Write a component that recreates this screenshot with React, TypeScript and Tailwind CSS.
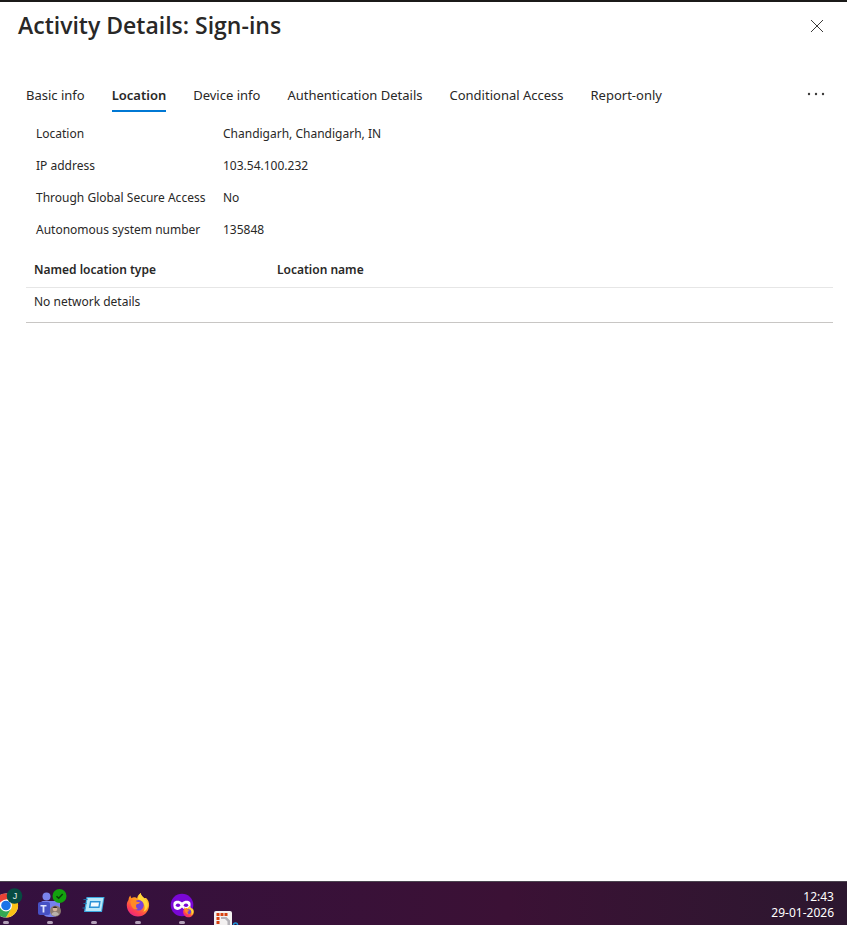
import { useState } from 'react';

const tabs = ['Basic info', 'Location', 'Device info', 'Authentication Details', 'Conditional Access', 'Report-only'];

const details = [
  { label: 'Location', value: 'Chandigarh, Chandigarh, IN' },
  { label: 'IP address', value: '103.54.100.232' },
  { label: 'Through Global Secure Access', value: 'No' },
  { label: 'Autonomous system number', value: '135848' },
];

function Running() {
  return <rect x="19" y="39" width="6" height="3" rx="1.5" fill="#b3a0b8" />;
}

function ChromeIcon() {
  return (
    <svg viewBox="16 0 28 43" className="h-[43px] w-7" aria-hidden="true">
      <circle cx="22" cy="23.5" r="12" fill="#fff" />
      <path d="M22 23.5 11.6 17.5A12 12 0 0 1 32.4 17.5H22Z" fill="#e94235" />
      <path d="M32.4 17.5A12 12 0 0 1 22 35.5L27.2 26.5 22 17.5Z" fill="#fbc116" />
      <path d="M11.6 17.5A12 12 0 0 0 22 35.5L27.2 26.5 16.8 26.5Z" fill="#34a853" />
      <circle cx="22" cy="23.5" r="6" fill="#fff" />
      <circle cx="22" cy="23.5" r="4.8" fill="#1a73e8" />
      <circle cx="30.5" cy="14" r="7.8" fill="#064b41" />
      <text x="31" y="17" textAnchor="middle" fontSize="9" fill="#e6f2ef" className="font-['Liberation_Sans',sans-serif]">J</text>
      <Running />
    </svg>
  );
}

function TeamsIcon() {
  return (
    <svg viewBox="0 0 44 43" className="h-[43px] w-11" aria-hidden="true">
      <circle cx="18.5" cy="14.5" r="4" fill="#7b83eb" />
      <path d="M13 21a2 2 0 0 1 2-2h15a2 2 0 0 1 2 2v7a7 7 0 0 1-7 7h-4a8 8 0 0 1-8-8Z" fill="#7680ed" />
      <rect x="10" y="20" width="12" height="13" rx="2" fill="#4650c4" />
      <path d="M12.5 23h6v1.600h-2.100v5.900h-1.800v-5.900h-2.100Z" fill="#dfe2ff" />
      <circle cx="27.5" cy="29" r="5.5" fill="#8c7b70" />
      <circle cx="27" cy="27" r="2.3" fill="#d7b49a" />
      <path d="M24.7 26a2.4 2.4 0 0 1 4.6 0Z" fill="#3b2b2a" />
      <path d="M23.5 32.5c1-3.6 6-3.6 7.5 0a5.5 5.5 0 0 1-7.5 0Z" fill="#b9b1ab" />
      <circle cx="31.5" cy="14" r="7" fill="#13a10e" />
      <path d="m28.5 14.2 2.2 2.1 4-4.2" fill="none" stroke="#093d08" strokeWidth="1.5" />
      <Running />
    </svg>
  );
}

function RunIcon() {
  return (
    <svg viewBox="0 0 44 43" className="h-[43px] w-11" aria-hidden="true">
      <path d="M14.500 15h18l-2.500 15H12Z" fill="#3ba9e0" />
      <path d="M15.500 16h15.800l-2.200 13H13.500Z" fill="#b9e8fa" />
      <path d="M18 19h10.700l-1.200 7H16.800Z" fill="#2a93d6" />
      <path d="M19.200 20.500h7.800l-.6 4h-7.800Z" fill="#f3fbff" />
      <path d="M11.500 17.5h4M11.500 21.5h3M10.500 26h3" stroke="#1c6fa8" strokeWidth="1" />
      <Running />
    </svg>
  );
}

function FirefoxShape() {
  return (
    <>
      <path d="M2 7C2.2 5 3 3.6 4 2.6c0 1.2.4 2 1 2.6 1-.8 2-1 3-.9C9.2 4.400 10 4.800 10.600 5.400 10.800 3.400 12 1.400 14.200 0c.2 2.200 1.600 3.400 3.600 5.200 1-.1 1.800-.1 1.800-.1C21.600 7.200 22.800 9.500 22.600 12.500 22.200 19 17.500 23.500 11.500 23.500S.500 19 .3 12.500C.2 10.500.8 8.600 2 7Z" fill="url(#flame)" />
      <path d="M11.500 6C11.700 3.400 12.600 1.400 14.200 0c.2 2.200 1.600 3.400 3.600 5.200 2.800 2.600 4.400 5.800 3.200 9.300-1 2.800-2.600 3.900-4.200 4.300 1.800-2.300 1.800-5.600.6-7.900C16.200 8.500 14 7 11.500 6Z" fill="#ffd83a" />
      <circle cx="12" cy="12.200" r="5.200" fill="#7542d9" />
      <path d="M4 8c2.500-1.500 5-.6 6.500.7l3 .5c-.5 1.500-2 1.800-3.400 2-1.300 1.600-.4 3.900 1.400 4.800C8 17.800 4 14.500 4 8Z" fill="#ff8a25" />
    </>
  );
}

function FirefoxIcon() {
  return (
    <svg viewBox="0 0 44 43" className="h-[43px] w-11" aria-hidden="true">
      <defs>
        <linearGradient id="flame" x1="0.8" y1="0" x2="0.2" y2="1">
          <stop offset="0" stopColor="#ffe03d" />
          <stop offset="0.45" stopColor="#ff8b1f" />
          <stop offset="0.75" stopColor="#ff4052" />
          <stop offset="1" stopColor="#e3218b" />
        </linearGradient>
      </defs>
      <g transform="translate(10.500 11)">
        <FirefoxShape />
      </g>
      <Running />
    </svg>
  );
}

function PrivateFirefoxIcon() {
  return (
    <svg viewBox="0 0 44 43" className="h-[43px] w-11" aria-hidden="true">
      <circle cx="22" cy="23" r="11.300" fill="#7a07d6" />
      <path d="M14 20c2-2 5.500-1.700 8 .4 2.500-2.100 6-2.400 8-.4.800 1 .9 5-.5 6.800-2 2-5.300 1.200-7.500-1.200-2.200 2.400-5.500 3.200-7.500 1.200C13.100 25 13.200 21 14 20Z" fill="#fff" />
      <ellipse cx="18" cy="23.200" rx="2.200" ry="1.700" fill="#7a07d6" />
      <ellipse cx="26" cy="23.200" rx="2.200" ry="1.700" fill="#7a07d6" />
      <g transform="translate(23 24) scale(.48)">
        <FirefoxShape />
      </g>
      <Running />
    </svg>
  );
}

function SnipIcon() {
  return (
    <svg viewBox="0 0 44 43" className="h-[43px] w-11" aria-hidden="true">
      <rect x="10" y="29" width="18" height="20" rx="2" fill="#f3f1f1" />
      <path d="M17 35h5.500l3.500 3.500V47h-2.500v-7.500L21 37h-4Z" fill="#b4b2b8" />
      <path d="M12.500 32.500H24" stroke="#d8410f" strokeWidth="3" strokeDasharray="3 1" />
      <path d="M14 35V45" stroke="#d8410f" strokeWidth="3" strokeDasharray="3 1" />
      <circle cx="31.500" cy="43" r="2" fill="none" stroke="#1f93d6" strokeWidth="1.500" />
    </svg>
  );
}

const apps = [
  { name: 'Chrome', Icon: ChromeIcon },
  { name: 'Teams', Icon: TeamsIcon },
  { name: 'Run', Icon: RunIcon },
  { name: 'Firefox', Icon: FirefoxIcon },
  { name: 'Firefox Private Browsing', Icon: PrivateFirefoxIcon },
  { name: 'Snipping Tool', Icon: SnipIcon },
];

export default function App() {
  const [activeTab, setActiveTab] = useState('Location');

  return (
    <div className="flex min-h-screen flex-col border-t-2 border-[#1b1a19] bg-white font-['Noto_Sans','Open_Sans',sans-serif] text-xs text-[#292827]">
      <header className="flex items-center justify-between pt-1 pr-5 pl-[18px]">
        <h1 className="pb-0.5 font-['Open_Sans','Noto_Sans',sans-serif] text-[23px] leading-[38px] font-semibold">
          Activity Details: Sign-ins
        </h1>
        <button aria-label="Close" className="p-1">
          <svg viewBox="0 0 12 12" className="size-3" fill="none" stroke="#3b3a39" aria-hidden="true">
            <path d="M0 0 12 12M12 0 0 12" />
          </svg>
        </button>
      </header>

      <main className="flex-1 pr-3.5 pl-[26px]">
        <div className="mt-9 flex items-start justify-between">
          <div role="tablist" className="flex gap-[27px]">
            {tabs.map((tab) => (
              <button
                key={tab}
                role="tab"
                aria-selected={tab === activeTab}
                onClick={() => setActiveTab(tab)}
                className={
                  tab === activeTab
                    ? 'h-[30px] border-b-2 border-[#0078d4] text-[13px] font-semibold whitespace-nowrap'
                    : 'h-[30px] border-b-2 border-transparent text-[13px] whitespace-nowrap'
                }
              >
                {tab}
              </button>
            ))}
          </div>
          <button aria-label="More tabs" className="flex h-6 items-center px-2">
            <svg viewBox="0 0 18 4" className="h-1 w-[18px]" fill="#3b3a39" aria-hidden="true">
              <circle cx="2" cy="2" r="1.200" />
              <circle cx="9" cy="2" r="1.200" />
              <circle cx="16" cy="2" r="1.200" />
            </svg>
          </button>
        </div>

        <dl className="mt-1.5 grid grid-cols-[187px_1fr] pl-2.5 leading-8">
          {details.map((item) => (
            <div key={item.label} className="contents">
              <dt className="whitespace-nowrap">{item.label}</dt>
              <dd>{item.value}</dd>
            </div>
          ))}
        </dl>

        <table className="mt-1.5 w-full table-fixed border-b border-[#c8c6c4] text-left">
          <thead>
            <tr className="h-[35px] border-b border-[#e6e6e6]">
              <th className="w-[243px] px-2 pt-0.5 font-semibold">Named location type</th>
              <th className="px-2 pt-0.5 font-semibold">Location name</th>
            </tr>
          </thead>
          <tbody>
            <tr>
              <td colSpan={2} className="px-2 pt-1.5 pb-3">No network details</td>
            </tr>
          </tbody>
        </table>
      </main>

      <footer className="flex items-center justify-between border-t border-[#4b444f] bg-linear-to-r from-[#34103f] via-[#3b1135] via-60% to-[#2c172f] pr-[13px]">
        <nav className="flex">
          {apps.map(({ name, Icon }) => (
            <button key={name} aria-label={name}>
              <Icon />
            </button>
          ))}
        </nav>
        <div className="pt-0.5 text-right leading-4 text-white">
          <div>12:43</div>
          <div>29-01-2026</div>
        </div>
      </footer>
    </div>
  );
}
